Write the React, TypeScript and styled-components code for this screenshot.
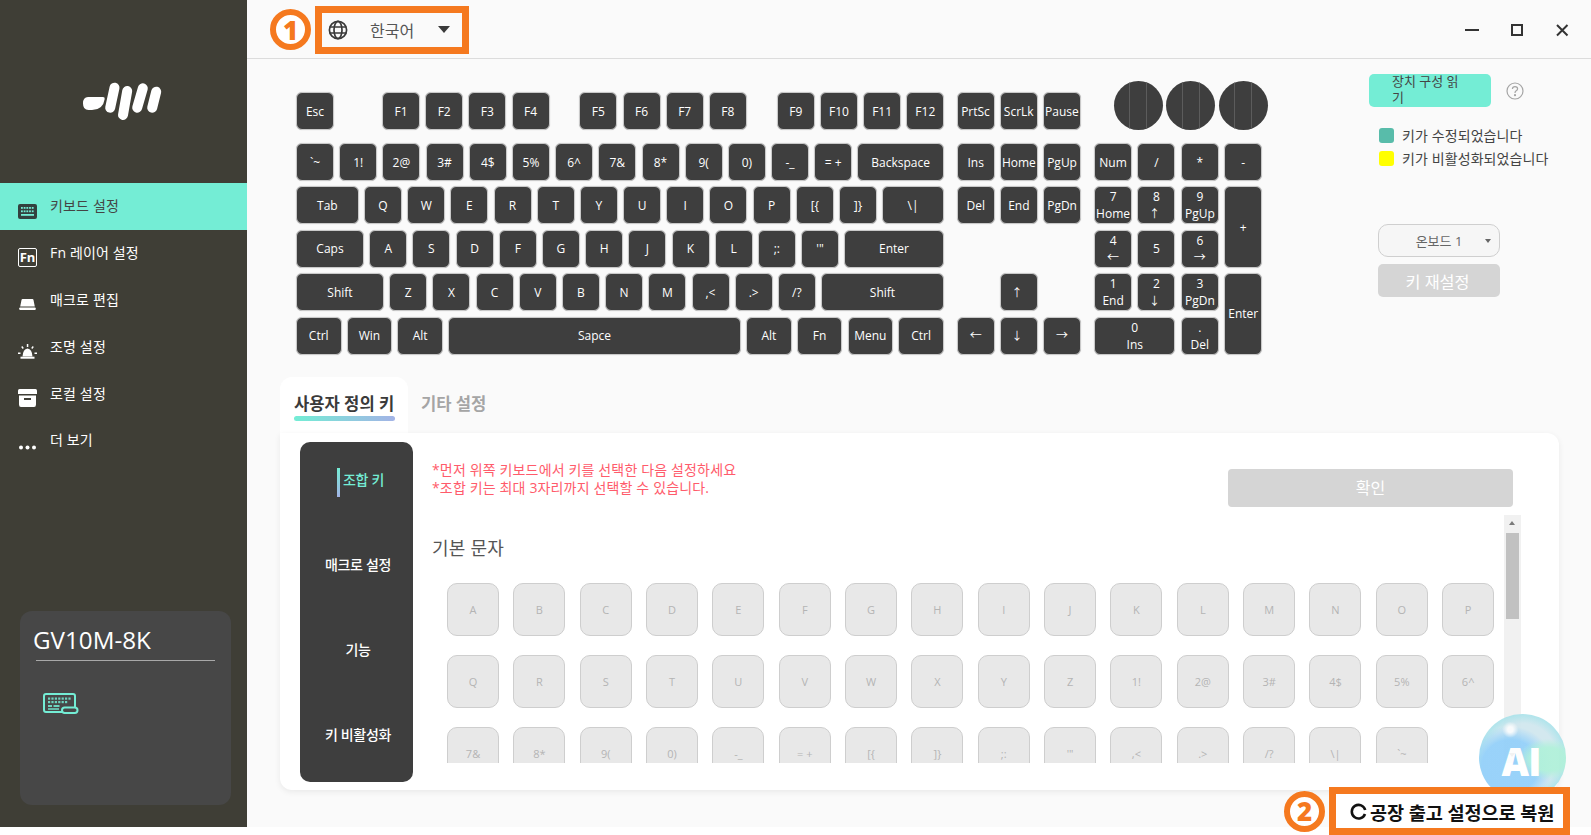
import React from "react";
import styled, { createGlobalStyle } from "styled-components";

const FONT = `"Open Sans", "Noto Sans CJK KR", sans-serif`;
const ORANGE = "#f5791f";
const MINT = "#74edd5";
const DARK = "#3e3e3e";

const Global = createGlobalStyle`
  html, body { margin: 0; padding: 0; background: #fff; }
  body { font-family: ${FONT}; overflow: hidden; }
  * { box-sizing: border-box; }
`;

const Page = styled.div`
  position: relative;
  display: flex;
  width: 1591px;
  height: 835px;
  overflow: hidden;
`;
const App_ = styled.div`
  display: flex;
  width: 1591px;
  height: 827px;
  background: #fafafa;
`;
const Sidebar = styled.aside`
  flex: 0 0 247px;
  display: flex;
  flex-direction: column;
  background: #3f3e36;
  padding-bottom: 22px;
`;
const LogoArea = styled.div`
  height: 183px;
  padding: 80px 0 0 82px;
`;
const NavList = styled.nav`
  display: flex;
  flex-direction: column;
`;
const NavItem = styled.div<{ $active?: boolean }>`
  height: 46.9px;
  display: flex;
  align-items: center;
  gap: 13px;
  padding-left: 18px;
  background: ${(p) => (p.$active ? MINT : "transparent")};
  color: ${(p) => (p.$active ? "#444" : "#fff")};
  font-size: 14px;
  letter-spacing: 0.15px;
  svg { flex: none; margin-top: 8px; }
`;
const NavText = styled.span`
  margin-top: -3px;
`;
const DeviceCard = styled.div`
  margin: auto 16px 0 20px;
  height: 194px;
  border-radius: 12px;
  background: #474747;
  padding: 14px 16px 0;
  display: flex;
  flex-direction: column;
`;
const DeviceName = styled.div`
  color: #fff;
  font-size: 24.2px;
  line-height: 30px;
  margin-left: -3px;
`;
const DeviceRule = styled.div`
  height: 1px;
  background: #a8a8a8;
  margin: 5px 0 32px;
`;
const DeviceIcon = styled.div`
  padding-left: 7px;
`;

const Main = styled.main`
  flex: 1;
  display: flex;
  flex-direction: column;
  min-width: 0;
`;
const Header = styled.header`
  height: 59px;
  flex: none;
  display: flex;
  align-items: center;
  border-bottom: 1px solid #dcdcdc;
  padding: 1px 22px 0 23px;
`;
const Badge = styled.div`
  width: 41px;
  height: 41px;
  flex: none;
  border-radius: 50%;
  border: 6px solid ${ORANGE};
  background: #fff;
  color: ${ORANGE};
  font-size: 26px;
  font-weight: 800;
  display: flex;
  align-items: center;
  justify-content: center;
  line-height: 1;
  font-family: "Open Sans", sans-serif;
`;
const LangBox = styled.div`
  margin-left: 4px;
  width: 154px;
  height: 48px;
  border: 7px solid ${ORANGE};
  display: flex;
  align-items: center;
  padding-left: 6px;
  color: #555;
  font-size: 16px;
`;
const LangText = styled.span`
  margin-left: 22px;
`;
const LangCaret = styled.span`
  margin-left: 24px;
  width: 0;
  height: 0;
  border-left: 6px solid transparent;
  border-right: 6px solid transparent;
  border-top: 7px solid #3a3a3a;
`;
const WinControls = styled.div`
  margin-left: auto;
  display: flex;
  align-items: center;
  gap: 31px;
`;

const TopArea = styled.section`
  height: 318px;
  flex: none;
  display: flex;
  padding: 15px 0 0 49px;
`;
const Keyboard = styled.div`
  width: 972px;
  flex: none;
  padding-top: 7px;
`;
const FnRow = styled.div`
  display: flex;
  align-items: flex-end;
  gap: 5.2px;
  height: 49px;
  margin-bottom: 13px;
`;
const KeyBody = styled.div`
  display: flex;
  align-items: flex-start;
`;
const MainBlock = styled.div`
  width: 648px;
  display: flex;
  flex-direction: column;
  gap: 5.4px;
`;
const Row = styled.div`
  display: flex;
  gap: 5.2px;
`;
const Key = styled.div<{ $w?: number; $ml?: number; $col?: number; $row?: number; $cs?: number; $rs?: number }>`
  width: ${(p) => (p.$w ? `${p.$w}px` : p.$col || p.$rs || p.$cs ? "auto" : "38px")};
  height: ${(p) => (p.$rs ? "auto" : "38px")};
  flex: none;
  margin-left: ${(p) => p.$ml ?? 0}px;
  ${(p) => (p.$col ? `grid-column: ${p.$col} / span ${p.$cs ?? 1};` : "")}
  ${(p) => (p.$row ? `grid-row: ${p.$row} / span ${p.$rs ?? 1};` : "")}
  background: ${DARK};
  border: 1.5px solid #c9c9c9;
  border-radius: 6px;
  box-shadow: 0 0 1px rgba(0, 0, 0, 0.25);
  color: #fff;
  font-size: 12px;
  line-height: 17px;
  white-space: nowrap;
  overflow: hidden;
  display: flex;
  flex-direction: column;
  align-items: center;
  justify-content: center;
`;
const VArrow = styled.span`
  margin-right: 4px;
  font-size: 11px;
`;
const Knob = styled.div<{ $ml?: number }>`
  position: relative;
  width: 49px;
  height: 49px;
  flex: none;
  margin-left: ${(p) => p.$ml ?? -1.7}px;
  border-radius: 50%;
  background: ${DARK};
  overflow: hidden;
  display: flex;
  justify-content: center;
  gap: 16px;
`;
const KnobLine = styled.i`
  width: 1px;
  background: #5c5c5c;
`;
const NavBlock = styled.div`
  margin-left: 12.7px;
  display: grid;
  grid-template-columns: repeat(3, 38px);
  grid-template-rows: repeat(5, 38px);
  gap: 5.4px 5.2px;
`;
const NumBlock = styled.div`
  margin-left: 13px;
  display: grid;
  grid-template-columns: repeat(4, 38px);
  grid-template-rows: repeat(5, 38px);
  gap: 5.4px;
`;

const SidePanel = styled.div`
  padding: 0 0 0 101px;
  width: 300px;
`;
const ReadRow = styled.div`
  display: flex;
  align-items: center;
  gap: 15px;
`;
const ReadButton = styled.div`
  width: 122px;
  height: 33px;
  border-radius: 5px;
  background: ${MINT};
  color: #444;
  font-size: 13px;
  line-height: 16px;
  padding: 0 28px 3px 23px;
  display: flex;
  align-items: center;
  word-break: break-all;
`;
const Legend = styled.div`
  margin: 20px 0 59px 10px;
  display: flex;
  flex-direction: column;
  gap: 8px;
`;
const LegendRow = styled.div`
  display: flex;
  align-items: center;
  gap: 8px;
  height: 15px;
  font-size: 14px;
  letter-spacing: 0.1px;
  color: #444;
  white-space: nowrap;
`;
const Swatch = styled.span<{ $c: string }>`
  width: 15px;
  height: 15px;
  margin-top: 1px;
  border-radius: 3px;
  background: ${(p) => p.$c};
`;
const Select = styled.div`
  position: relative;
  margin-left: 9px;
  width: 122px;
  height: 33px;
  border-radius: 10px;
  border: 1px solid #cfcfcf;
  background: #f6f6f6;
  color: #666;
  font-size: 13px;
  display: flex;
  align-items: center;
  justify-content: center;
`;
const SelectCaret = styled.span`
  position: absolute;
  right: 8px;
  top: 14px;
  width: 0;
  height: 0;
  border-left: 3.5px solid transparent;
  border-right: 3.5px solid transparent;
  border-top: 4px solid #666;
`;
const ResetButton = styled.div`
  margin: 7px 0 0 9px;
  width: 122px;
  height: 33px;
  border-radius: 5px;
  background: #d5d5d5;
  color: #fff;
  font-size: 16.3px;
  display: flex;
  align-items: center;
  justify-content: center;
  padding-right: 3px;
`;

const TabsRow = styled.div`
  height: 56px;
  flex: none;
  display: flex;
  margin-left: 33px;
`;
const TabActive = styled.div`
  width: 128px;
  background: #fff;
  border-radius: 12px 12px 0 0;
  padding: 14px 14px 0;
  color: #3a3a3a;
  font-size: 16.6px;
  font-weight: 600;
  line-height: 26px;
  white-space: nowrap;
`;
const TabBar = styled.div`
  width: 101px;
  height: 5px;
  margin-top: -1px;
  border-radius: 3px;
  background: linear-gradient(90deg, #74edd5, #a3b3e6);
`;
const TabIdle = styled.div`
  padding: 14px 0 0 13px;
  color: #a5a5a5;
  font-size: 16.6px;
  font-weight: 600;
  line-height: 26px;
`;
const Panel = styled.div`
  margin-left: 33px;
  width: 1279px;
  height: 357px;
  flex: none;
  background: #fff;
  border-radius: 0 12px 12px 12px;
  box-shadow: 0 2px 6px rgba(0, 0, 0, 0.07);
  padding: 9px 38px 8px 20px;
  display: flex;
`;
const SubNav = styled.div`
  width: 113px;
  flex: none;
  border-radius: 10px;
  background: ${DARK};
  color: #fff;
  font-size: 14px;
  font-weight: 500;
  display: flex;
  flex-direction: column;
  align-items: center;
  gap: 42.9px;
  padding: 16px 0 0 3px;
`;
const SubItem = styled.div<{ $active?: boolean }>`
  position: relative;
  height: 42px;
  flex: none;
  display: flex;
  align-items: center;
  margin-left: ${(p) => (p.$active ? "11px" : "0")};
  color: ${(p) => (p.$active ? MINT : "#fff")};
  letter-spacing: -0.3px;
`;
const SubBar = styled.i`
  position: absolute;
  left: -6px;
  top: 10px;
  width: 3px;
  height: 29px;
  background: linear-gradient(180deg, #74edd5, #a3b3e6);
`;
const Content = styled.div`
  flex: 1;
  padding-left: 19px;
  min-width: 0;
  display: flex;
  flex-direction: column;
`;
const NoticeRow = styled.div`
  height: 73px;
  flex: none;
  display: flex;
  justify-content: space-between;
  padding: 19px 8px 0 0;
`;
const Notice = styled.div`
  color: #ff5b6b;
  font-size: 14px;
  letter-spacing: 0.15px;
  line-height: 18px;
`;
const Confirm = styled.div`
  width: 285px;
  height: 38px;
  margin-top: 8px;
  border-radius: 4px;
  background: #d5d5d5;
  color: #fff;
  font-size: 16px;
  display: flex;
  align-items: center;
  justify-content: center;
  padding-bottom: 2px;
`;
const ScrollWrap = styled.div`
  display: flex;
  height: 248px;
  flex: none;
`;
const ScrollArea = styled.div`
  flex: 1;
  overflow: hidden;
  min-width: 0;
`;
const Heading = styled.h3`
  margin: 19px 0 0;
  font-size: 18px;
  letter-spacing: 0.2px;
  line-height: 28px;
  font-weight: 400;
  color: #555;
`;
const CharGrid = styled.div`
  margin: 21px 0 0 15px;
  display: grid;
  grid-template-columns: repeat(16, 52px);
  grid-auto-rows: 53px;
  gap: 19px 14.35px;
`;
const CharKey = styled.div`
  background: #e8e8e8;
  border: 1px solid #cecece;
  border-radius: 10px;
  color: #b4b4b4;
  font-size: 11px;
  display: flex;
  align-items: center;
  justify-content: center;
`;
const ScrollTrack = styled.div`
  position: relative;
  width: 17px;
  flex: none;
  background: #f1f1f1;
`;
const Thumb = styled.div`
  position: absolute;
  left: 2px;
  right: 2px;
  top: 18px;
  height: 86px;
  background: #c1c1c1;
`;
const ScrollArrow = styled.span<{ $down?: boolean }>`
  position: absolute;
  left: 5px;
  ${(p) => (p.$down ? "bottom: 6px;" : "top: 6px;")}
  width: 0;
  height: 0;
  border-left: 3.5px solid transparent;
  border-right: 3.5px solid transparent;
  ${(p) => (p.$down ? "border-top: 4px solid #7a7a7a;" : "border-bottom: 4px solid #7a7a7a;")}
`;

const Bubble = styled.div`
  position: absolute;
  left: 1479px;
  top: 714px;
  width: 87px;
  height: 87px;
  border-radius: 50%;
  background:
    radial-gradient(circle at 36% 18%, rgba(255, 255, 255, 0.9) 0 3%, transparent 9%),
    radial-gradient(ellipse at 80% 52%, rgba(170, 240, 215, 0.95) 0 18%, transparent 32%),
    radial-gradient(ellipse at 36% 60%, rgba(140, 205, 250, 0.95) 0 36%, transparent 54%),
    radial-gradient(circle at 50% 50%, #cfe6ee 0 55%, #a4e2ea 72%, #8fd9e8 100%);
  opacity: 0.9;
  color: #fff;
  font-size: 38px;
  font-weight: 800;
  letter-spacing: -1px;
  font-family: "Open Sans", sans-serif;
  display: flex;
  align-items: center;
  justify-content: center;
  padding: 6px 3px 0 0;
`;
const RestoreGroup = styled.div`
  position: absolute;
  left: 1284px;
  top: 787px;
  display: flex;
  align-items: center;
  gap: 4px;
`;
const RestoreBox = styled.div`
  width: 241px;
  height: 48px;
  border: 7px solid ${ORANGE};
  background: #fff;
  color: #111;
  font-size: 18.6px;
  font-weight: 700;
  letter-spacing: -0.1px;
  display: flex;
  align-items: center;
  padding-left: 14px;
  gap: 3px;
  white-space: nowrap;
`;

const Logo = () => (
  <svg width="82" height="44" viewBox="0 0 82 44" fill="none">
    <path d="M6 17 H21 Q23 17 22.7 19 Q21 30 10 30 H6.5 Q1 30 1 23.5 Q1 17 6 17Z" fill="#fff" />
    <g stroke="#fff" strokeWidth="10" strokeLinecap="round">
      <path d="M32.5 7.7 L28.2 27.7" />
      <path d="M45.2 11 L41 35" />
      <path d="M60.8 8.3 L55.2 27.7" />
      <path d="M74.2 11.7 L70.2 27.7" />
    </g>
  </svg>
);

const IconKeyboard = () => (
  <svg width="19" height="15" viewBox="0 0 19 15" style={{ marginTop: 11 }}>
    <rect x="0" y="0" width="19" height="15" rx="2" fill="#33413f" />
    <g fill={MINT}>
      {[0, 1, 2, 3, 4].map((i) => <rect key={i} x={3 + i * 2.7} y="3" width="1.8" height="1.8" />)}
      {[0, 1, 2, 3, 4].map((i) => <rect key={i} x={3 + i * 2.7} y="6.4" width="1.8" height="1.8" />)}
      <rect x="3" y="10" width="13" height="1.8" />
    </g>
  </svg>
);
const FnBox = styled.div`
  flex: none;
  width: 19px;
  height: 19px;
  margin-top: 8px;
  border: 1.5px solid #fff;
  border-radius: 2px;
  color: #fff;
  font-size: 13px;
  font-weight: 700;
  letter-spacing: 0;
  line-height: 1;
  display: flex;
  align-items: center;
  justify-content: center;
`;
const IconMacro = () => (
  <svg width="19" height="11" viewBox="0 0 19 11" fill="#fff">
    <path d="M4.5 0 H14.5 Q15.3 0 15.5 1 L16.8 7.5 H2.2 L3.5 1 Q3.7 0 4.5 0Z" />
    <rect x="1.3" y="8.5" width="16.4" height="2.5" rx="0.8" />
  </svg>
);
const IconLight = () => (
  <svg width="19" height="15" viewBox="0 0 19 15" fill="#fff">
    <path d="M4.5 12.5 Q5 5 9.5 4.5 Q14 5 14.5 12.5Z" />
    <rect x="2.5" y="12.7" width="14" height="2" />
    <rect x="8.8" y="0" width="1.5" height="3" />
    <path d="M3.2 3 L4.3 2 L5.8 4 L4.7 4.9Z" />
    <path d="M15.8 3 L14.7 2 L13.2 4 L14.3 4.9Z" />
    <rect x="0" y="8.5" width="2.5" height="1.5" />
    <rect x="16.5" y="8.5" width="2.5" height="1.5" />
  </svg>
);
const IconBox = () => (
  <svg width="19" height="18" viewBox="0 0 19 18" fill="#fff">
    <path d="M1.5 0 H17.5 Q19 0 19 1.5 V5 H0 V1.5 Q0 0 1.5 0Z" />
    <path fillRule="evenodd" d="M1 6.5 H18 V15.5 Q18 18 16 18 H3 Q1 18 1 15.5Z M6 9 V11 H13 V9Z" />
  </svg>
);
const IconDots = () => (
  <svg width="19" height="5" viewBox="0 0 19 5" fill="#fff" style={{ marginTop: 13 }}>
    <circle cx="3" cy="2.5" r="2" />
    <circle cx="9.5" cy="2.5" r="2" />
    <circle cx="16" cy="2.5" r="2" />
  </svg>
);
const IconDevice = () => (
  <svg width="36" height="22" viewBox="0 0 36 22" fill="none" stroke={MINT} strokeWidth="2">
    <path d="M19 19 H3 Q1 19 1 17 V3 Q1 1 3 1 H30 Q32 1 32 3 V14" />
    <rect x="19" y="14.5" width="15.5" height="5.5" rx="2.7" />
    <g stroke="none" fill={MINT} opacity="0.85">
      {[0, 1, 2, 3, 4, 5, 6].map((i) => <rect key={i} x={5 + i * 3.4} y="4.5" width="2.2" height="2.2" />)}
      {[0, 1, 2, 3, 4, 5].map((i) => <rect key={i} x={5 + i * 3.4} y="8" width="2.2" height="2.2" />)}
      <rect x="5" y="12" width="4" height="2" />
      <rect x="10.5" y="12" width="6" height="2" />
      <rect x="5" y="15.2" width="11" height="1.6" />
    </g>
  </svg>
);
const IconGlobe = () => (
  <svg width="20" height="20" viewBox="0 0 20 20" fill="none" stroke="#3a3a3a" strokeWidth="1.7">
    <circle cx="10" cy="10" r="8.6" />
    <ellipse cx="10" cy="10" rx="4" ry="8.6" />
    <path d="M1.6 7 H18.4 M1.6 13 H18.4" />
  </svg>
);
const IconHelp = () => (
  <svg width="18" height="18" viewBox="0 0 18 18" fill="none" stroke="#a5a5a5" strokeWidth="1.2">
    <circle cx="9" cy="9" r="8" />
    <path d="M6.4 7 Q6.5 4.6 9 4.6 Q11.6 4.6 11.6 6.8 Q11.6 8 10.2 8.8 Q9 9.5 9 11" />
    <circle cx="9" cy="13.2" r="0.5" fill="#a5a5a5" />
  </svg>
);
const IconRefresh = () => (
  <svg width="17" height="17" viewBox="0 0 17 17" fill="none" stroke="#111" strokeWidth="2.6">
    <path d="M15.2 7 A6.8 6.8 0 1 0 15 11" />
  </svg>
);
const IconMin = () => (
  <svg width="14" height="14" viewBox="0 0 14 14" stroke="#333" strokeWidth="2"><path d="M0 7 H14" /></svg>
);
const IconMax = () => (
  <svg width="14" height="14" viewBox="0 0 14 14" fill="none" stroke="#333" strokeWidth="2"><rect x="2" y="2" width="10" height="10" /></svg>
);
const IconClose = () => (
  <svg width="14" height="14" viewBox="0 0 14 14" stroke="#333" strokeWidth="2"><path d="M2 2 L12.5 12.5 M12.5 2 L2 12.5" /></svg>
);

type K = { l: string; w?: number; ml?: number };
const k = (l: string, w?: number, ml?: number): K => ({ l, w, ml });
const chars = (s: string) => s.split(" ").map((l) => k(l));
const PLUS = "=\u00a0+";

const fnRow: K[] = [
  k("Esc"), k("F1", undefined, 42.8), k("F2"), k("F3"), k("F4"),
  k("F5", undefined, 24.6), k("F6"), k("F7"), k("F8"),
  k("F9", undefined, 24.7), k("F10"), k("F11"), k("F12"),
  k("PrtSc", undefined, 7), k("ScrLk"), k("Pause"),
];
const rows: K[][] = [
  [...chars(`\`~ 1! 2@ 3# 4$ 5% 6^ 7& 8* 9( 0) -_ ${PLUS}`), k("Backspace", 86.4)],
  [k("Tab", 62.8), ...chars("Q W E R T Y U I O P [{ ]}"), k("\\|", 61.6)],
  [k("Caps", 68), ...chars("A S D F G H J K L ;: '\""), k("Enter", 99.6)],
  [k("Shift", 88), ...chars("Z X C V B N M ,< .> /?"), k("Shift", 122.8)],
  [k("Ctrl", 45.5), k("Win", 45.5), k("Alt", 45.5), k("Sapce", 292.9), k("Alt", 45.5), k("Fn", 45.5), k("Menu", 45.5), k("Ctrl", 45.7)],
];
const navKeys: [string, number, number][] = [
  ["Ins", 1, 1], ["Home", 2, 1], ["PgUp", 3, 1],
  ["Del", 1, 2], ["End", 2, 2], ["PgDn", 3, 2],
  ["↑", 2, 4],
  ["←", 1, 5], ["↓", 2, 5], ["→", 3, 5],
];
const numKeys: { t: string[]; c: number; r: number; cs?: number; rs?: number }[] = [
  { t: ["Num"], c: 1, r: 1 }, { t: ["/"], c: 2, r: 1 }, { t: ["*"], c: 3, r: 1 }, { t: ["-"], c: 4, r: 1 },
  { t: ["7", "Home"], c: 1, r: 2 }, { t: ["8", "↑"], c: 2, r: 2 }, { t: ["9", "PgUp"], c: 3, r: 2 }, { t: ["+"], c: 4, r: 2, rs: 2 },
  { t: ["4", "←"], c: 1, r: 3 }, { t: ["5"], c: 2, r: 3 }, { t: ["6", "→"], c: 3, r: 3 },
  { t: ["1", "End"], c: 1, r: 4 }, { t: ["2", "↓"], c: 2, r: 4 }, { t: ["3", "PgDn"], c: 3, r: 4 }, { t: ["Enter"], c: 4, r: 4, rs: 2 },
  { t: ["0", "Ins"], c: 1, r: 5, cs: 2 }, { t: [".", "Del"], c: 3, r: 5 },
];
const grid = `A B C D E F G H I J K L M N O P Q R S T U V W X Y Z 1! 2@ 3# 4$ 5% 6^ 7& 8* 9( 0) -_ ${PLUS} [{ ]} ;: '" ,< .> /? \\| \`~`.split(" ");

const Glyph = ({ t }: { t: string }) =>
  t === "↑" || t === "↓" ? <VArrow>{t}</VArrow> : <span>{t}</span>;

export default function App() {
  return (
    <Page>
      <Global />
      <App_>
        <Sidebar>
          <LogoArea><Logo /></LogoArea>
          <NavList>
            <NavItem $active><IconKeyboard /><NavText>키보드 설정</NavText></NavItem>
            <NavItem><FnBox>Fn</FnBox><NavText>Fn 레이어 설정</NavText></NavItem>
            <NavItem><IconMacro /><NavText>매크로 편집</NavText></NavItem>
            <NavItem><IconLight /><NavText>조명 설정</NavText></NavItem>
            <NavItem><IconBox /><NavText>로컬 설정</NavText></NavItem>
            <NavItem><IconDots /><NavText>더 보기</NavText></NavItem>
          </NavList>
          <DeviceCard>
            <DeviceName>GV10M-8K</DeviceName>
            <DeviceRule />
            <DeviceIcon><IconDevice /></DeviceIcon>
          </DeviceCard>
        </Sidebar>
        <Main>
          <Header>
            <Badge>1</Badge>
            <LangBox>
              <IconGlobe />
              <LangText>한국어</LangText>
              <LangCaret />
            </LangBox>
            <WinControls>
              <IconMin /><IconMax /><IconClose />
            </WinControls>
          </Header>
          <TopArea>
            <Keyboard>
              <FnRow>
                {fnRow.map((x, i) => <Key key={i} $ml={x.ml}>{x.l}</Key>)}
                <Knob $ml={27.6}><KnobLine /><KnobLine /></Knob>
                <Knob><KnobLine /><KnobLine /></Knob>
                <Knob><KnobLine /><KnobLine /></Knob>
              </FnRow>
              <KeyBody>
                <MainBlock>
                  {rows.map((r, i) => (
                    <Row key={i}>
                      {r.map((x, j) => <Key key={j} $w={x.w}>{x.l}</Key>)}
                    </Row>
                  ))}
                </MainBlock>
                <NavBlock>
                  {navKeys.map(([l, c, r]) => <Key key={l} $col={c} $row={r}><Glyph t={l} /></Key>)}
                </NavBlock>
                <NumBlock>
                  {numKeys.map((x, i) => (
                    <Key key={i} $col={x.c} $row={x.r} $cs={x.cs} $rs={x.rs}>
                      {x.t.map((t) => <Glyph key={t} t={t} />)}
                    </Key>
                  ))}
                </NumBlock>
              </KeyBody>
            </Keyboard>
            <SidePanel>
              <ReadRow>
                <ReadButton>장치 구성 읽기</ReadButton>
                <IconHelp />
              </ReadRow>
              <Legend>
                <LegendRow><Swatch $c="#58bcaa" />키가 수정되었습니다</LegendRow>
                <LegendRow><Swatch $c="#ffff00" />키가 비활성화되었습니다</LegendRow>
              </Legend>
              <Select>온보드 1<SelectCaret /></Select>
              <ResetButton>키 재설정</ResetButton>
            </SidePanel>
          </TopArea>
          <TabsRow>
            <TabActive>사용자 정의 키<TabBar /></TabActive>
            <TabIdle>기타 설정</TabIdle>
          </TabsRow>
          <Panel>
            <SubNav>
              <SubItem $active><SubBar />조합 키</SubItem>
              <SubItem>매크로 설정</SubItem>
              <SubItem>기능</SubItem>
              <SubItem>키 비활성화</SubItem>
            </SubNav>
            <Content>
              <NoticeRow>
                <Notice>
                  *먼저 위쪽 키보드에서 키를 선택한 다음 설정하세요<br />
                  *조합 키는 최대 3자리까지 선택할 수 있습니다.
                </Notice>
                <Confirm>확인</Confirm>
              </NoticeRow>
              <ScrollWrap>
                <ScrollArea>
                  <Heading>기본 문자</Heading>
                  <CharGrid>
                    {grid.map((c) => <CharKey key={c}>{c}</CharKey>)}
                  </CharGrid>
                </ScrollArea>
                <ScrollTrack>
                  <ScrollArrow />
                  <Thumb />
                  <ScrollArrow $down />
                </ScrollTrack>
              </ScrollWrap>
            </Content>
          </Panel>
        </Main>
      </App_>
      <Bubble>AI</Bubble>
      <RestoreGroup>
        <Badge>2</Badge>
        <RestoreBox><IconRefresh />공장 출고 설정으로 복원</RestoreBox>
      </RestoreGroup>
    </Page>
  );
}
